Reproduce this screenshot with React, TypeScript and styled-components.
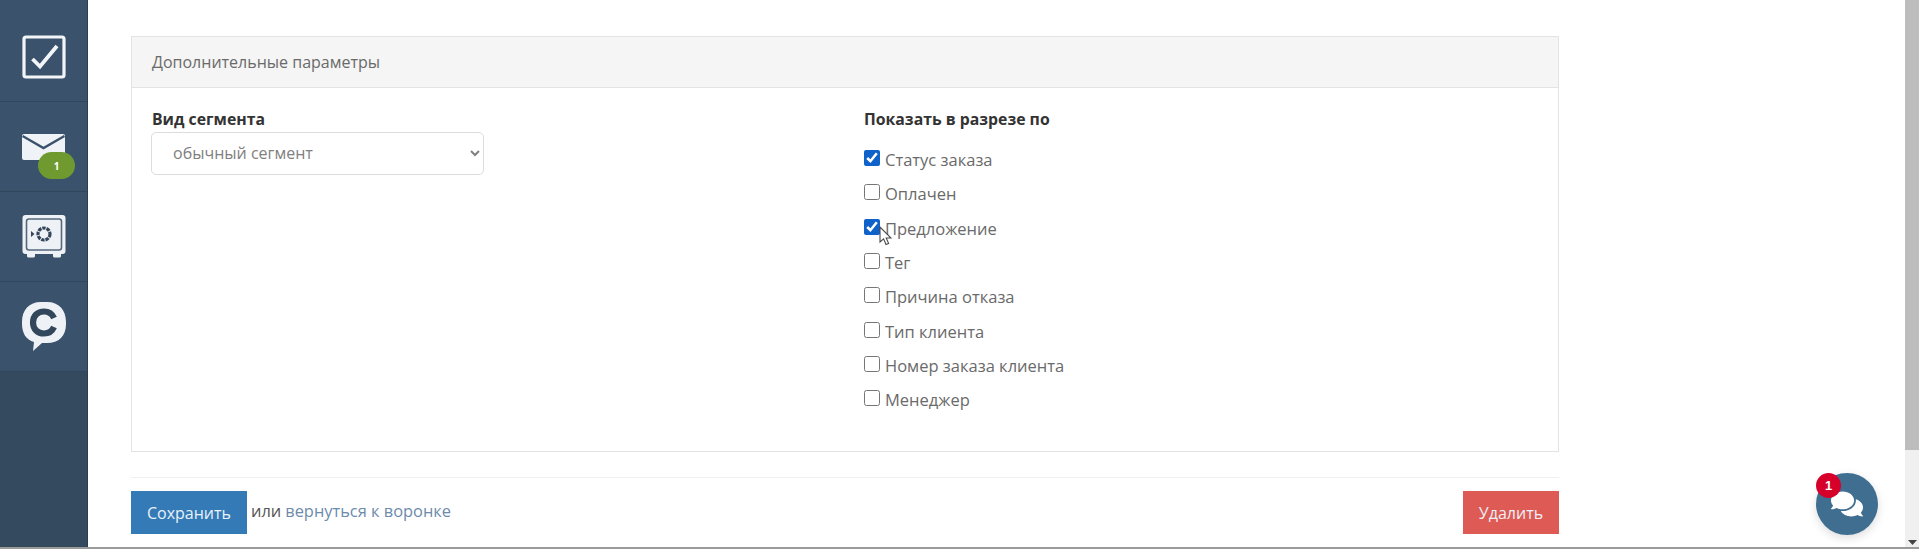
import React from "react";
import styled, { createGlobalStyle } from "styled-components";
import { FaComments } from "react-icons/fa";

const Global = createGlobalStyle`
  html, body { margin: 0; padding: 0; background: #fff; overflow: hidden; }
  body { font-family: "Open Sans", "Noto Sans", "Liberation Sans", sans-serif; color: #5a5a5a; }
`;

const Frame = styled.div`
  position: relative;
  display: flex;
  width: 1919px;
  height: 549px;
  box-sizing: border-box;
  border-bottom: 2px solid #9b9b9b;
  overflow: hidden;
`;

const Sidebar = styled.nav`
  flex: 0 0 88px;
  display: flex;
  flex-direction: column;
  background: #334a5f;
  border-right: 1px solid #2c3f50;
  box-sizing: border-box;
`;

const SideItem = styled.div<{ $first?: boolean }>`
  position: relative;
  height: ${(p) => (p.$first ? 102 : 90)}px;
  padding-top: ${(p) => (p.$first ? 12 : 0)}px;
  box-sizing: border-box;
  display: flex;
  align-items: center;
  justify-content: center;
  background: #3a526c;
  border-bottom: 1px solid #30465d;
`;

const MailBadge = styled.span`
  position: absolute;
  left: 38px;
  top: 50px;
  width: 37px;
  height: 27px;
  border-radius: 14px;
  background: #6f9a30;
  color: #fff;
  font-size: 10px;
  font-weight: 700;
  display: flex;
  align-items: center;
  justify-content: center;
`;

const Main = styled.main`
  flex: 1;
  padding: 36px 360px 0 43px;
  box-sizing: border-box;
`;

const Panel = styled.section`
  height: 416px;
  box-sizing: border-box;
  border: 1px solid #e3e3e3;
`;

const PanelHeader = styled.header`
  height: 51px;
  box-sizing: border-box;
  padding-left: 20px;
  display: flex;
  align-items: center;
  background: #f5f5f5;
  border-bottom: 1px solid #e3e3e3;
  font-size: 16px;
  color: #6a6a6a;
`;

const PanelBody = styled.div`
  display: grid;
  grid-template-columns: 712px 1fr;
  padding: 20px 0 0 20px;
`;

const FieldLabel = styled.div`
  height: 24px;
  line-height: 22px;
  font-size: 15.8px;
  font-weight: 700;
  color: #333;
`;

const SegmentSelect = styled.select`
  display: block;
  width: 333px;
  height: 43px;
  margin-left: -1px;
  padding: 0 0 2px 17px;
  box-sizing: border-box;
  background: #fff;
  border: 1px solid #dcdcdc;
  border-radius: 5px;
  font-family: inherit;
  font-size: 16px;
  color: #808080;
`;

const CheckList = styled.div`
  margin-top: 9px;
  display: flex;
  flex-direction: column;
`;

const CheckRow = styled.label`
  position: relative;
  height: 34.3px;
  display: flex;
  align-items: center;
  gap: 5px;
  font-size: 16.5px;
  color: #6a6a6a;
`;

const CheckBox = styled.input`
  width: 16px;
  height: 16px;
  margin: 0;
  accent-color: #0f62c9;
`;

const CheckText = styled.span`
  padding-top: 3px;
`;

const Pointer = styled.svg`
  position: absolute;
  left: 15px;
  top: 16px;
`;

const Footer = styled.footer`
  margin-top: 25px;
  padding-top: 13px;
  border-top: 1px solid #f0f0f0;
  display: flex;
  justify-content: space-between;
`;

const FooterLeft = styled.div`
  display: flex;
  align-items: center;
  gap: 4px;
  font-size: 16.4px;
  color: #555;
`;

const FooterNote = styled.span`
  margin-top: -5px;
`;

const BackLink = styled.a`
  margin: -5px 0 0 0;
  color: #6d8bab;
  text-decoration: none;
`;

const ActionButton = styled.button<{ $tone: string; $width: number }>`
  width: ${(p) => p.$width}px;
  height: 43px;
  padding: 0;
  border: 0;
  background: ${(p) => p.$tone};
  color: #eaf1f7;
  font-family: inherit;
  font-size: 16px;
`;

const ScrollTrack = styled.aside`
  position: absolute;
  right: 0;
  top: 0;
  bottom: 0;
  width: 14px;
  display: flex;
  flex-direction: column;
  background: #f0f0f0;
`;

const ScrollThumb = styled.div`
  height: 450px;
  background: #bdbdbd;
`;

const ScrollArrow = styled.svg`
  margin: auto auto 2px;
`;

const ChatButton = styled.button`
  position: absolute;
  left: 1816px;
  top: 473px;
  width: 62px;
  height: 62px;
  padding: 0;
  border: 0;
  border-radius: 50%;
  background: #3f6e91;
  color: #fff;
  box-shadow: 0 3px 10px rgba(0, 0, 0, 0.14);
  display: flex;
  align-items: center;
  justify-content: center;
`;

const ChatBadge = styled.span`
  position: absolute;
  left: 0;
  top: 0;
  width: 25px;
  height: 25px;
  border-radius: 50%;
  background: #d6002a;
  color: #fff;
  font-size: 13px;
  font-weight: 700;
  display: flex;
  align-items: center;
  justify-content: center;
`;

const options: [string, boolean][] = [
  ["Статус заказа", true],
  ["Оплачен", false],
  ["Предложение", true],
  ["Тег", false],
  ["Причина отказа", false],
  ["Тип клиента", false],
  ["Номер заказа клиента", false],
  ["Менеджер", false],
];

const TaskIcon = () => (
  <svg width="44" height="44" viewBox="0 0 44 44" fill="none">
    <rect x="2" y="2" width="40" height="40" rx="2" stroke="#f3f6f9" strokeWidth="3.2" />
    <path d="M10.5 24 L18 31.5 L35 11" stroke="#f3f6f9" strokeWidth="3.8" />
  </svg>
);

const MailIcon = () => (
  <svg width="43" height="26" viewBox="0 0 43 26">
    <rect x="0" y="0" width="43" height="26" rx="2" fill="#eff2f6" />
    <path d="M0.5 2 L21.5 14 L42.5 2" fill="none" stroke="#3a526c" strokeWidth="2.4" />
  </svg>
);

const SafeIcon = () => (
  <svg width="44" height="43" viewBox="0 0 44 43" fill="none">
    <rect x="0.5" y="0" width="43" height="39" rx="3" fill="#eef1f6" />
    <path d="M5 38 h8 v3 a1.5 1.5 0 0 1 -1.5 1.5 h-5 a1.5 1.5 0 0 1 -1.5 -1.5 z M31 38 h8 v3 a1.5 1.5 0 0 1 -1.5 1.5 h-5 a1.5 1.5 0 0 1 -1.5 -1.5 z" fill="#eef1f6" />
    <rect x="4.5" y="4" width="35" height="31" rx="2.5" stroke="#56687c" strokeWidth="1.6" />
    <circle cx="22" cy="19" r="6" stroke="#35465a" strokeWidth="3.2" strokeDasharray="3.4 0.9" />
    <path d="M9 16 L12.5 19 L9 22 Z" fill="#35465a" />
  </svg>
);

const BubbleIcon = () => (
  <svg width="44" height="49" viewBox="0 0 44 49">
    <path d="M19 0 H25 C37 0 44 8 44 20 V22 C44 34 37 41 25 41 H20 L11 49 L12 40 C4 38 0 31 0 22 V20 C0 8 7 0 19 0 Z" fill="#eef1f6" />
    <path d="M32 16 C30 11.5 26 9.5 22 9.5 C15.5 9.5 11 14 11 20.5 C11 27 15.5 31.5 22 31.5 C26 31.5 30 29.5 32 25" fill="none" stroke="#33475c" strokeWidth="6.2" />
  </svg>
);

export default function App() {
  return (
    <Frame>
      <Global />
      <Sidebar>
        <SideItem $first>
          <TaskIcon />
        </SideItem>
        <SideItem>
          <MailIcon />
          <MailBadge>1</MailBadge>
        </SideItem>
        <SideItem>
          <SafeIcon />
        </SideItem>
        <SideItem>
          <BubbleIcon />
        </SideItem>
      </Sidebar>
      <Main>
        <Panel>
          <PanelHeader>Дополнительные параметры</PanelHeader>
          <PanelBody>
            <div>
              <FieldLabel>Вид сегмента</FieldLabel>
              <SegmentSelect defaultValue="обычный сегмент">
                <option>обычный сегмент</option>
              </SegmentSelect>
            </div>
            <div>
              <FieldLabel>Показать в разрезе по</FieldLabel>
              <CheckList>
                {options.map(([name, checked], i) => (
                  <CheckRow key={name}>
                    <CheckBox type="checkbox" defaultChecked={checked} />
                    <CheckText>{name}</CheckText>
                    {i === 2 && (
                      <Pointer width="13" height="20" viewBox="0 0 13 20">
                        <path d="M1 1 V16 L4.6 12.8 L7 18.5 L9.6 17.4 L7.2 12 H12 Z" fill="#fff" stroke="#4a4a4a" strokeWidth="1.1" />
                      </Pointer>
                    )}
                  </CheckRow>
                ))}
              </CheckList>
            </div>
          </PanelBody>
        </Panel>
        <Footer>
          <FooterLeft>
            <ActionButton $tone="#337ab7" $width={116}>Сохранить</ActionButton>
            <FooterNote>или</FooterNote>
            <BackLink href="#">вернуться к воронке</BackLink>
          </FooterLeft>
          <ActionButton $tone="#de5a55" $width={96}>Удалить</ActionButton>
        </Footer>
      </Main>
      <ScrollTrack>
        <ScrollThumb />
        <ScrollArrow width="9" height="5" viewBox="0 0 9 5">
          <path d="M0 0 H9 L4.5 5 Z" fill="#444" />
        </ScrollArrow>
      </ScrollTrack>
      <ChatButton aria-label="Чат">
        <FaComments size={32} />
        <ChatBadge>1</ChatBadge>
      </ChatButton>
    </Frame>
  );
}
